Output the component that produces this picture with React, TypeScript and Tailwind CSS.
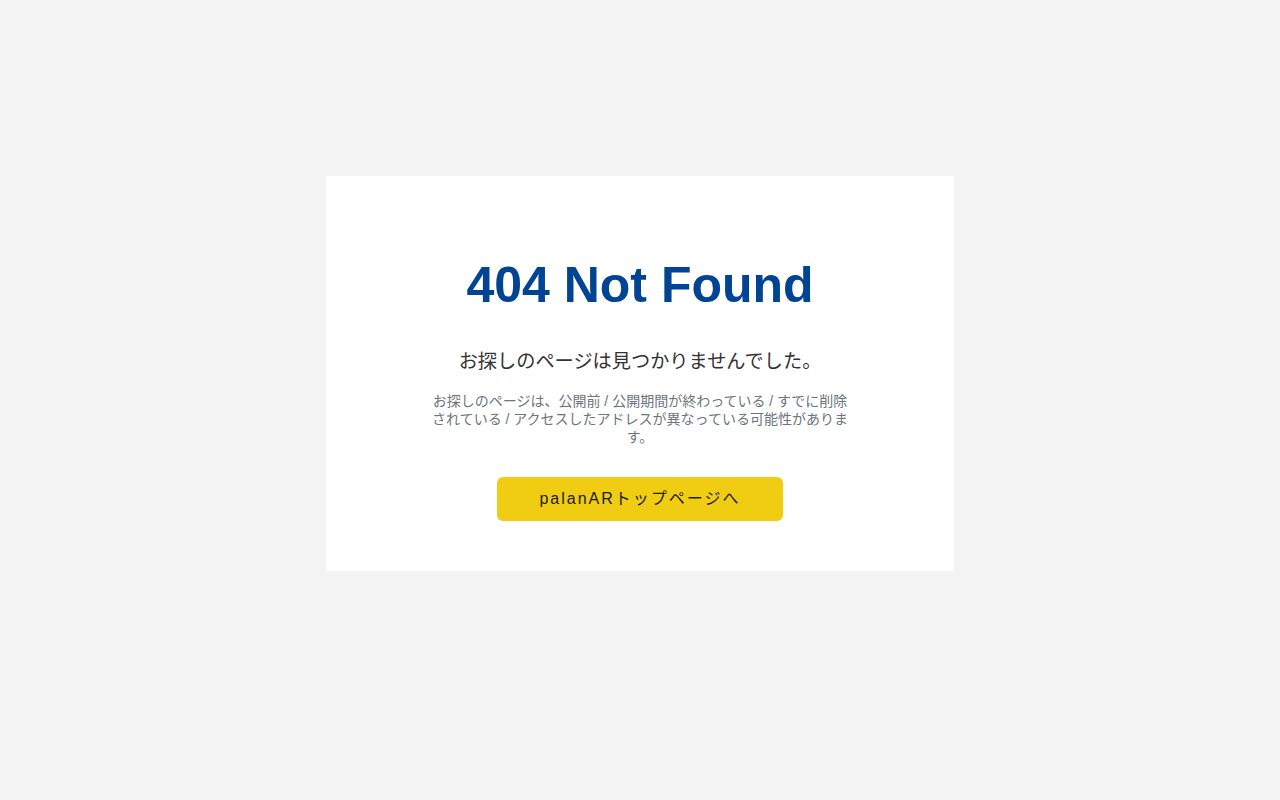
export default function App() {
  return (
    <div
      className="min-h-screen bg-[#f3f3f3] flex items-center justify-center pb-[53px]"
      style={{ fontFamily: '"Liberation Sans", Arial, "Noto Sans CJK JP", sans-serif' }}
    >
      <div className="w-[628px] bg-white pt-[79px] pb-[50px] flex flex-col items-center text-center">
        <h1 className="text-[50px] leading-[60px] font-bold text-[#004493]">404 Not Found</h1>
        <p className="mt-[33px] text-[19.2px] leading-[28px] text-[#333]">お探しのページは見つかりませんでした。</p>
        <p className="mt-[16px] w-[420px] text-sm leading-[18px] text-[#6c757d]">
          お探しのページは、公開前 / 公開期間が終わっている / すでに削除されている / アクセスしたアドレスが異なっている可能性があります。
        </p>
        <a
          href="#"
          className="mt-[31px] w-[286px] h-[44px] rounded-md bg-[#f0cd12] flex items-center justify-center text-base tracking-[0.125em] text-[#1a1a1a]"
        >
          palanARトップページへ
        </a>
      </div>
    </div>
  );
}
